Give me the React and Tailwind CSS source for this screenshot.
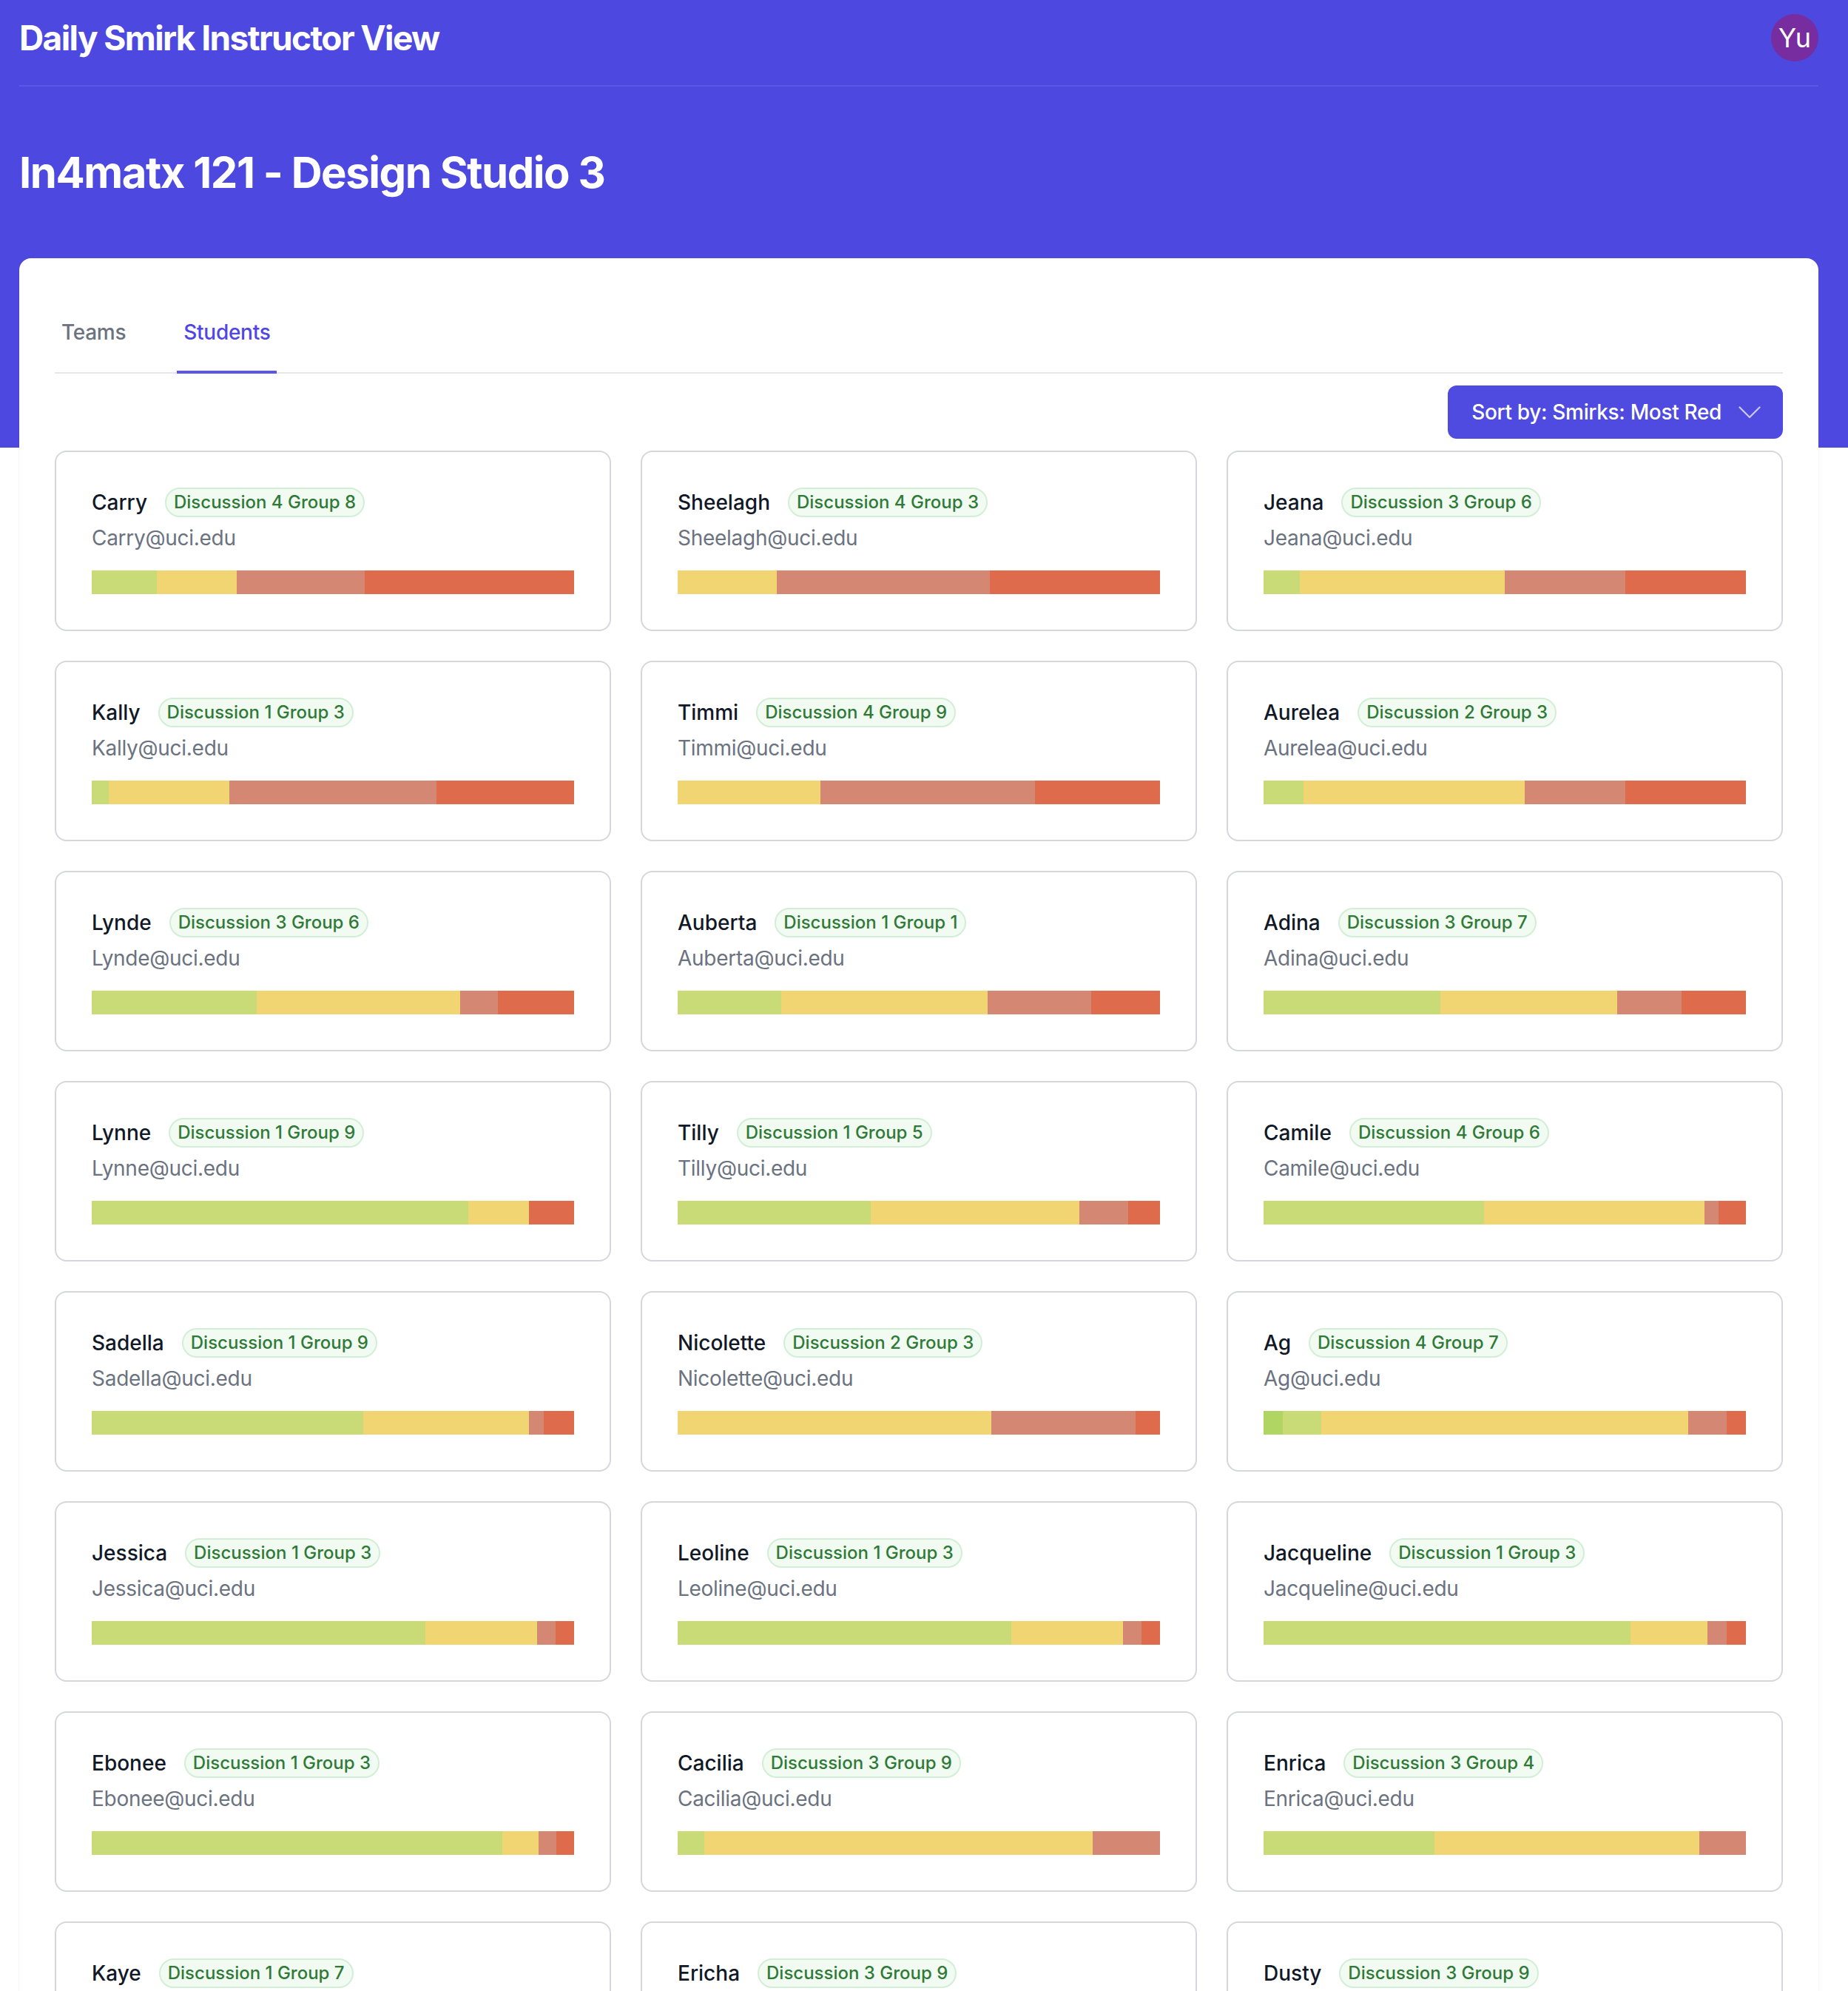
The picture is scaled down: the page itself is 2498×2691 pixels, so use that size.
import React, { useState } from 'react'

const COLORS = ['#b1d562', '#c9db77', '#f1d573', '#d48873', '#de6b4c']

const students = [
  { name: 'Carry', group: 'Discussion 4 Group 8', smirks: [0, 205, 255, 405, 662] },
  { name: 'Sheelagh', group: 'Discussion 4 Group 3', smirks: [0, 0, 313, 674, 539] },
  { name: 'Jeana', group: 'Discussion 3 Group 6', smirks: [0, 114, 649, 381, 382] },
  { name: 'Kally', group: 'Discussion 1 Group 3', smirks: [0, 55, 381, 656, 435] },
  { name: 'Timmi', group: 'Discussion 4 Group 9', smirks: [0, 0, 451, 679, 396] },
  { name: 'Aurelea', group: 'Discussion 2 Group 3', smirks: [0, 126, 700, 318, 382] },
  { name: 'Lynde', group: 'Discussion 3 Group 6', smirks: [0, 523, 644, 119, 241] },
  { name: 'Auberta', group: 'Discussion 1 Group 1', smirks: [0, 327, 653, 328, 218] },
  { name: 'Adina', group: 'Discussion 3 Group 7', smirks: [0, 559, 559, 204, 204] },
  { name: 'Lynne', group: 'Discussion 1 Group 9', smirks: [0, 1192, 192, 0, 143] },
  { name: 'Tilly', group: 'Discussion 1 Group 5', smirks: [0, 611, 660, 154, 101] },
  { name: 'Camile', group: 'Discussion 4 Group 6', smirks: [0, 697, 698, 44, 87] },
  { name: 'Sadella', group: 'Discussion 1 Group 9', smirks: [0, 860, 524, 47, 96] },
  { name: 'Nicolette', group: 'Discussion 2 Group 3', smirks: [0, 0, 992, 456, 78] },
  { name: 'Ag', group: 'Discussion 4 Group 7', smirks: [61, 121, 1161, 122, 61] },
  { name: 'Jessica', group: 'Discussion 1 Group 3', smirks: [0, 1057, 353, 58, 59] },
  { name: 'Leoline', group: 'Discussion 1 Group 3', smirks: [0, 1055, 354, 58, 59] },
  { name: 'Jacqueline', group: 'Discussion 1 Group 3', smirks: [0, 1161, 243, 61, 61] },
  { name: 'Ebonee', group: 'Discussion 1 Group 3', smirks: [0, 1300, 115, 56, 56] },
  { name: 'Cacilia', group: 'Discussion 3 Group 9', smirks: [0, 84, 1229, 213, 0] },
  { name: 'Enrica', group: 'Discussion 3 Group 4', smirks: [0, 540, 838, 148, 0] },
  { name: 'Kaye', group: 'Discussion 1 Group 7', smirks: [0, 900, 420, 100, 107] },
  { name: 'Ericha', group: 'Discussion 3 Group 9', smirks: [0, 300, 900, 200, 127] },
  { name: 'Dusty', group: 'Discussion 3 Group 9', smirks: [0, 700, 600, 120, 107] },
]

const SmirkBar = ({ smirks }) => (
  <div className="flex h-[32px] mt-[24px]">
    {smirks.map((count, i) =>
      count > 0 ? (
        <div key={i} style={{ flexGrow: count, flexBasis: 0, backgroundColor: COLORS[i] }} />
      ) : null
    )}
  </div>
)

const StudentCard = ({ student }) => (
  <div className="bg-white border-2 border-[#d5d7dd] rounded-[16px] p-[48px]">
    <div className="flex items-center h-[40px]">
      <span className="text-[28px] leading-[40px] font-medium text-[#111827]">{student.name}</span>
      <span className="ml-[24px] h-[40px] flex items-center px-[10px] rounded-full border-2 border-[#d3eed6] bg-[#f1fbf2] text-[24px] font-medium text-[#2f7a37]">
        {student.group}
      </span>
    </div>
    <div className="mt-[8px] text-[28px] leading-[40px] tracking-[-0.01em] text-[#6b7280]">{student.name}@uci.edu</div>
    <SmirkBar smirks={student.smirks} />
  </div>
)

const ChevronDownThin = () => (
  <svg width="30" height="17" viewBox="0 0 30 17" fill="none" className="text-white/70">
    <polyline points="1.5,1.5 15,15 28.5,1.5" stroke="currentColor" strokeWidth="2.2" strokeLinecap="round" strokeLinejoin="round" />
  </svg>
)

export default function App() {
  const [tab, setTab] = useState('students')

  const tabClass = (key) =>
    `-mb-[2px] px-[9px] pt-[32px] pb-[32px] border-b-4 text-[28px] leading-[40px] font-medium tracking-[-0.01em] ${
      tab === key ? 'border-[#5b55e8] text-[#4f46e5]' : 'border-transparent text-[#6b7280]'
    }`

  return (
    <div className="min-h-screen bg-white font-['Inter',sans-serif]">
      <div className="bg-[#4d48df] pl-[26px] pr-[40px] pb-[256px]">
        <div className="flex items-center justify-between pt-[19px] pb-[32px] border-b-2 border-[#5c58e4]">
          <h1 className="text-[46px] leading-[64px] font-bold tracking-[-0.035em] text-white">Daily Smirk Instructor View</h1>
          <div className="w-[64px] h-[64px] rounded-full bg-[#772c9f] flex items-center justify-center text-white text-[36px]">
            Yu
          </div>
        </div>
        <h2 className="py-[80px] text-[58px] leading-[72px] font-bold tracking-tight text-white">In4matx 121 - Design Studio 3</h2>
      </div>

      <div className="pl-[26px] pr-[40px] -mt-[256px]">
        <div className="bg-white rounded-[16px] px-[48px] pt-[48px] pb-[48px] shadow-[0_1px_3px_rgba(0,0,0,0.08)]">
          <div className="flex gap-[60px] border-b-2 border-[#e5e7eb]">
            <button onClick={() => setTab('teams')} className={tabClass('teams')}>
              Teams
            </button>
            <button onClick={() => setTab('students')} className={tabClass('students')}>
              Students
            </button>
          </div>

          <div className="flex justify-end mt-[16px]">
            <button className="flex items-center gap-[23px] h-[72px] pl-[32px] pr-[30px] rounded-[12px] bg-[#4f4be0] text-white text-[28px] font-medium tracking-[-0.012em]">
              Sort by: Smirks: Most Red
              <ChevronDownThin />
            </button>
          </div>

          <div className="grid grid-cols-3 gap-[40px] mt-[16px]">
            {students.map((s) => (
              <StudentCard key={s.name} student={s} />
            ))}
          </div>
        </div>
      </div>
    </div>
  )
}
